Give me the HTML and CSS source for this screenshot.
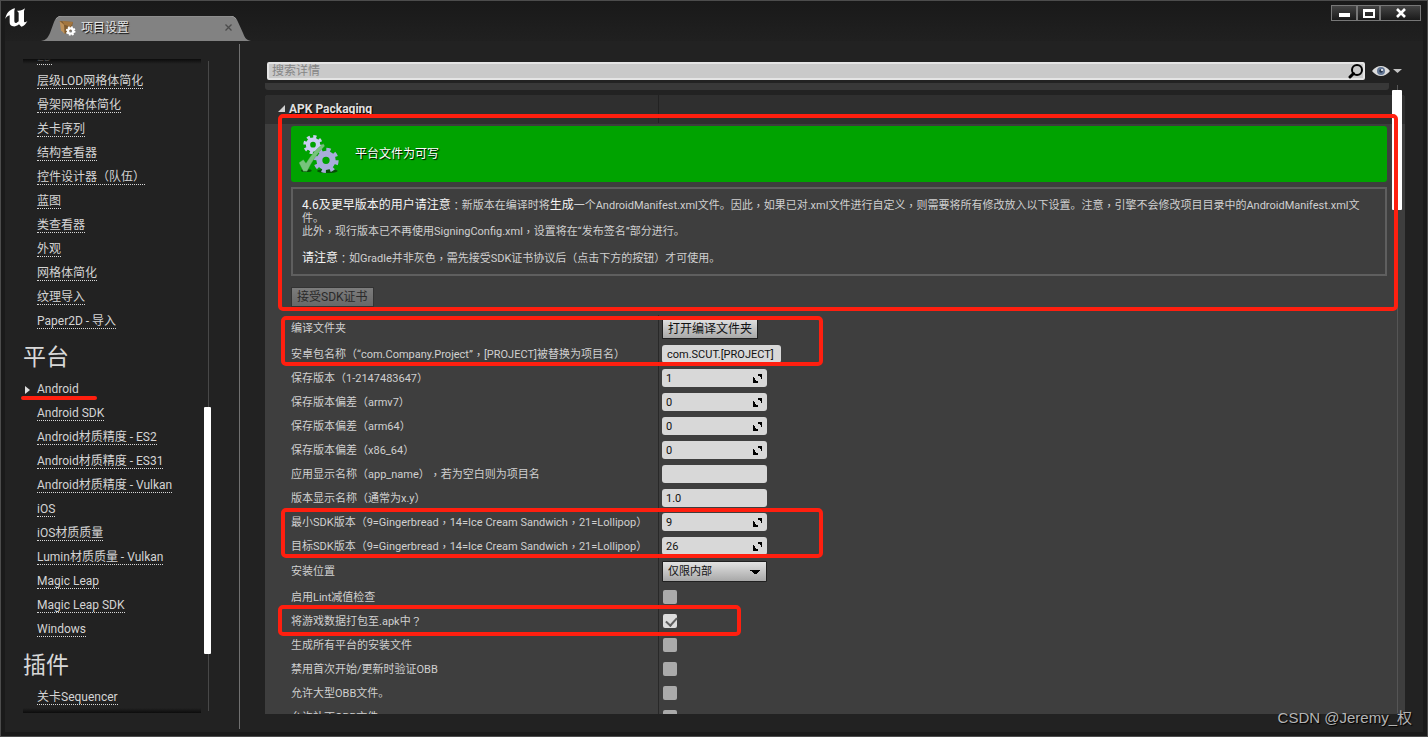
FILE: index.html
```html
<!DOCTYPE html>
<html lang="zh-CN">
<head>
<meta charset="utf-8">
<title>项目设置</title>
<link rel="stylesheet" href="styles.css">
</head>
<body>
<div class="window">
  <header class="titlebar">
    <svg class="logo" width="24" height="20" viewBox="0 0 72 60" aria-hidden="true"><path fill="#fff" d="M1 33C3 17 13 5 30 1L28 8V38C28 44 31 46 35 44L41 40V14L36 8C46 9 53 7 60 1L57 9V39C57 44 61 44 67 39C63 48 57 54 49 56L42 49C36 54 30 56 24 55C17 54 14 50 14 43V22C8 24 4 27 1 33Z"/></svg>
    <div class="tab">
      <svg class="tab-shape" width="210" height="25" viewBox="0 0 210 25" preserveAspectRatio="none" aria-hidden="true"><path fill="#828282" d="M0 25C6 24 7 21 9 17L13 6Q15 0 20 0H190Q195 0 197 6L202 17C204 22 205 24 210 25Z"/><path fill="none" stroke="#999" d="M15 3Q17 0 21 0H189Q193 0 195 3"/></svg>
      <div class="tab-content">
        <svg width="17" height="16" viewBox="0 0 51 48" aria-hidden="true"><path fill="#7e5b30" d="M2 3L42 6L37 30L17 42Z"/><path fill="#bd915a" d="M2 3L15 14L17 42L6 31Z"/><path fill="#a3763f" d="M10 3L42 6L35 20L16 14Z"/><circle cx="35" cy="33" r="8" fill="none" stroke="#fff" stroke-width="7"/><circle cx="35" cy="33" r="12" fill="none" stroke="#fff" stroke-width="5" stroke-dasharray="5 4.4"/></svg>
        <span class="tab-title">项目设置</span>
        <button class="tab-close" aria-label="关闭标签页"><svg width="7" height="7" viewBox="0 0 7 7"><path d="M.5.5l6 6M6.500.5l-6 6" stroke="#4c4c4c" stroke-width="1.300"/></svg></button>
      </div>
    </div>
    <div class="window-buttons">
      <button class="wb wb-min" aria-label="最小化"><svg width="11" height="10" viewBox="0 0 11 10"><path fill="#fff" d="M0 5h11v4H0z"/></svg></button>
      <button class="wb wb-max" aria-label="最大化"><svg width="12" height="10" viewBox="0 0 12 10"><path fill="#fff" fill-rule="evenodd" d="M0 1h12v9H0zM2 4v4h8V4z"/></svg></button>
      <button class="wb wb-close" aria-label="关闭"><svg width="12" height="10" viewBox="0 0 12 10"><path d="M2 1l8 8M10 1l-8 8" stroke="#fff" stroke-width="2.600"/></svg></button>
    </div>
  </header>

  <div class="content">
    <aside class="sidebar">
      <nav class="nav">
        <ul class="nav-list">
          <li><a href="#">2D</a></li>
          <li><a href="#">层级LOD网格体简化</a></li>
          <li><a href="#">骨架网格体简化</a></li>
          <li><a href="#">关卡序列</a></li>
          <li><a href="#">结构查看器</a></li>
          <li><a href="#">控件设计器（队伍）</a></li>
          <li><a href="#">蓝图</a></li>
          <li><a href="#">类查看器</a></li>
          <li><a href="#">外观</a></li>
          <li><a href="#">网格体简化</a></li>
          <li><a href="#">纹理导入</a></li>
          <li><a href="#">Paper2D - 导入</a></li>
        </ul>
        <h2>平台</h2>
        <ul>
          <li class="current"><a href="#">Android</a></li>
          <li><a href="#">Android SDK</a></li>
          <li><a href="#">Android材质精度 - ES2</a></li>
          <li><a href="#">Android材质精度 - ES31</a></li>
          <li><a href="#">Android材质精度 - Vulkan</a></li>
          <li><a href="#">iOS</a></li>
          <li><a href="#">iOS材质质量</a></li>
          <li><a href="#">Lumin材质质量 - Vulkan</a></li>
          <li><a href="#">Magic Leap</a></li>
          <li><a href="#">Magic Leap SDK</a></li>
          <li><a href="#">Windows</a></li>
        </ul>
        <h2>插件</h2>
        <ul>
          <li><a href="#">关卡Sequencer</a></li>
        </ul>
      </nav>
      <div class="side-scroll"><div class="side-thumb"></div></div>
    </aside>

    <main class="main">
      <div class="search-row">
        <div class="search">
          <input type="text" placeholder="搜索详情" aria-label="搜索详情">
          <svg width="16" height="16" viewBox="0 0 16 16" aria-hidden="true"><circle cx="10" cy="7" r="5" fill="none" stroke="#000" stroke-width="2"/><path d="M6.500 10.500L3 14" stroke="#000" stroke-width="3" stroke-linecap="round"/></svg>
        </div>
        <button class="view-options" aria-label="视图选项"><svg width="30" height="12" viewBox="0 0 30 12"><path fill="#dcdcdc" d="M0 6Q4 1 9 1T18 6Q14 11 9 11T0 6Z"/><circle cx="9" cy="6" r="4" fill="#647896"/><circle cx="9" cy="6" r="1.800" fill="#26364c"/><circle cx="10" cy="5" r="1" fill="#fff"/><path fill="#c4c4c4" d="M21 4h9l-4.500 4z"/></svg></button>
      </div>
      <div class="strip"></div>
      <section class="panel">
        <h3 class="category"><span class="category-name"><svg width="8" height="8" viewBox="0 0 8 8" aria-hidden="true"><path fill="#d0d0d0" d="M7 0v7H0z"/></svg>APK Packaging</span></h3>
        <div class="intro">
          <div class="banner">
            <svg width="40" height="40" viewBox="0 0 120 120" aria-hidden="true">
              <ellipse cx="85" cy="111" rx="31" ry="6" fill="#064f06"/><ellipse cx="22" cy="110" rx="16" ry="4" fill="#064f06"/>
              <g fill="none" stroke="#c9cdf0"><circle cx="42" cy="32" r="15" stroke-width="13"/><circle cx="42" cy="32" r="24" stroke-width="10" stroke-dasharray="9.400 9.450"/></g>
              <g fill="none" stroke="#a8addb"><circle cx="81" cy="79" r="20" stroke-width="18"/><circle cx="81" cy="79" r="32" stroke-width="12" stroke-dasharray="12.500 12.630"/></g>
              <path fill="#76c47c" stroke="#4c9f52" d="M0 86L13 77L21 88Q43 50 73 29L77 36Q46 66 24 112L13 112Z"/>
            </svg>
            <span>平台文件为可写</span>
          </div>
          <div class="notice">
            <p><strong>4.6及更早版本的用户请注意</strong><i>：</i>新版本在编译时将<strong>生成</strong>一个AndroidManifest.xml文件。因此<i>，</i>如果已对.xml文件进行自定义<i>，</i>则需要将所有修改放入以下设置。注意<i>，</i>引擎不会修改项目目录中的AndroidManifest.xml文<wbr>件。</p>
            <p>此外<i>，</i>现行版本已不再使用SigningConfig.xml<i>，</i>设置将在“发布签名”部分进行。</p>
            <p class="gap"><strong>请注意</strong><i>：</i>如Gradle并非灰色<i>，</i>需先接受SDK证书协议后（点击下方的按钮）才可使用。</p>
          </div>
          <button class="accept" disabled>接受SDK证书</button>
        </div>
        <div class="rows">
          <div class="row tall"><span class="name">编译文件夹</span><span class="value"><button class="open">打开编译文件夹</button></span></div>
          <div class="row"><label class="name" for="f1">安卓包名称（“com.Company.Project”<i>，</i>[PROJECT]被替换为项目名）</label><span class="value"><input class="field wide" id="f1" type="text" value="com.SCUT.[PROJECT]"></span></div>
          <div class="row"><label class="name" for="f2">保存版本（1-2147483647）</label><span class="value"><input class="field spin" id="f2" type="text" value="1"></span></div>
          <div class="row"><label class="name" for="f3">保存版本偏差（armv7）</label><span class="value"><input class="field spin" id="f3" type="text" value="0"></span></div>
          <div class="row"><label class="name" for="f4">保存版本偏差（arm64）</label><span class="value"><input class="field spin" id="f4" type="text" value="0"></span></div>
          <div class="row"><label class="name" for="f5">保存版本偏差（x86_64）</label><span class="value"><input class="field spin" id="f5" type="text" value="0"></span></div>
          <div class="row"><label class="name" for="f6">应用显示名称（app_name）<i>，</i>若为空白则为项目名</label><span class="value"><input class="field" id="f6" type="text" value=""></span></div>
          <div class="row"><label class="name" for="f7">版本显示名称（通常为x.y）</label><span class="value"><input class="field" id="f7" type="text" value="1.0"></span></div>
          <div class="row"><label class="name" for="f8">最小SDK版本（9=Gingerbread<i>，</i>14=Ice Cream Sandwich<i>，</i>21=Lollipop）</label><span class="value"><input class="field spin" id="f8" type="text" value="9"></span></div>
          <div class="row"><label class="name" for="f9">目标SDK版本（9=Gingerbread<i>，</i>14=Ice Cream Sandwich<i>，</i>21=Lollipop）</label><span class="value"><input class="field spin" id="f9" type="text" value="26"></span></div>
          <div class="row tall"><label class="name" for="f10">安装位置</label><span class="value"><select class="combo" id="f10"><option>仅限内部</option></select></span></div>
          <div class="row"><label class="name" for="c1">启用Lint减值检查</label><span class="value"><input class="check" id="c1" type="checkbox"></span></div>
          <div class="row"><label class="name" for="c2">将游戏数据打包至.apk中<i>？</i></label><span class="value"><input class="check" id="c2" type="checkbox" checked></span></div>
          <div class="row"><label class="name" for="c3">生成所有平台的安装文件</label><span class="value"><input class="check" id="c3" type="checkbox"></span></div>
          <div class="row"><label class="name" for="c4">禁用首次开始/更新时验证OBB</label><span class="value"><input class="check" id="c4" type="checkbox"></span></div>
          <div class="row"><label class="name" for="c5">允许大型OBB文件。</label><span class="value"><input class="check" id="c5" type="checkbox"></span></div>
          <div class="row"><label class="name" for="c6">允许补丁OBB文件。</label><span class="value"><input class="check" id="c6" type="checkbox"></span></div>
        </div>
      </section>
      <div class="main-scroll"><div class="main-thumb"></div></div>
    </main>
  </div>

  <div class="mark mark-intro"></div>
  <div class="mark mark-package"></div>
  <div class="mark mark-sdk"></div>
  <div class="mark mark-apk"></div>
  <div class="underline"></div>
  <div class="watermark">CSDN @Jeremy_权</div>
</div>
</body>
</html>
```

FILE: styles.css
```css
* { box-sizing: border-box; }

body {
  margin: 0;
  background: #1b1b1b;
  color: #d0d0d0;
  font: 12px/14px Roboto, "Noto Sans CJK SC", sans-serif;
}

button, input, select { font: inherit; margin: 0; }
ul, p, h2, h3 { margin: 0; padding: 0; font-weight: 400; }
ul { list-style: none; }
svg { display: block; flex: none; }

/* punctuation centred in its cell */
i {
  display: inline-block;
  font-family: "Noto Sans CJK TC", sans-serif;
  font-style: normal;
  line-height: 13px;
  vertical-align: top;
}

.window {
  position: relative;
  display: flex;
  flex-direction: column;
  height: 100vh;
  overflow: hidden;
  padding: 0 4px 4px;
  border: 1px solid #4c4c4c;
  background: #1a1a1a;
}

/* title bar */
.titlebar {
  display: flex;
  flex: none;
  height: 40px;
  background: linear-gradient(#191919, #202020);
}
.logo { margin: 7px 0 0; }
.tab {
  position: relative;
  width: 210px;
  height: 25px;
  margin: 15px 0 0 12px;
}
.tab-shape { position: absolute; inset: 0; width: 100%; }
.tab-content {
  position: relative;
  display: flex;
  align-items: center;
  height: 23px;
  padding: 0 19px 0 18px;
}
.tab-title {
  flex: 1;
  margin-left: 5px;
  color: #e4e4e4;
  text-shadow: 1px 1px 1px #000;
}
.tab-close { padding: 0; border: 0; background: none; }
.window-buttons {
  display: flex;
  height: 16px;
  margin: 4px 2px 0 auto;
}
.wb {
  display: flex;
  justify-content: center;
  align-items: center;
  padding: 0;
  border: 1px solid #777;
  background: linear-gradient(#444, #1a1a1a);
}
.wb-min { width: 26px; }
.wb-max { width: 23px; }
.wb-close { width: 41px; }

.content {
  display: flex;
  flex: 1;
  min-height: 0;
  background: #222;
}

/* sidebar */
.sidebar {
  display: flex;
  flex: none;
  width: 235px;
  margin: 3px 0;
  padding: 15px 28px 16px 18px;
  border-right: 1px solid #707070;
}
.nav {
  position: relative;
  width: 178px;
  overflow: hidden;
}
.nav::before, .nav::after {
  content: "";
  position: absolute;
  left: 0;
  right: 0;
  height: 5px;
}
.nav::before { top: 0; background: linear-gradient(#0c0c0c, transparent); }
.nav::after { bottom: 0; background: linear-gradient(transparent, #0c0c0c); }
.nav-list { margin-top: -13px; }
.nav li {
  display: flex;
  align-items: center;
  height: 24px;
  padding-left: 14px;
}
.nav a {
  border-bottom: 1px dotted #d8d8d8;
  color: #d4d4d4;
  line-height: 13px;
  text-decoration: none;
  white-space: nowrap;
}
.nav .current { padding-left: 2px; }
.current::before {
  content: "";
  margin-right: 7px;
  border: 4px solid transparent;
  border-left: 5px solid #ddd;
  border-right: 0;
}
.nav h2 {
  height: 44px;
  padding-top: 4px;
  color: #d8d8d8;
  font-size: 23px;
  line-height: 40px;
}
.side-scroll {
  width: 7px;
  margin: 2px 0 2px 3px;
  background: linear-gradient(#484848, #484848) 4px 0 / 1px 100% no-repeat;
}
.side-thumb {
  height: 38%;
  margin-top: 346px;
  border-radius: 1px;
  background: #fff;
}

/* details */
.main {
  position: relative;
  display: flex;
  flex: 1;
  flex-direction: column;
  min-width: 0;
  padding: 21px 18px 18px 25px;
}
.search-row {
  display: flex;
  flex: none;
  align-items: center;
  height: 18px;
  gap: 7px;
  padding: 0 3px 0 2px;
}
.search {
  display: flex;
  flex: 1;
  align-items: center;
  height: 18px;
  border: 2px solid #e4e4e4;
  border-radius: 2px;
  background: #c9c9c9;
}
.search input {
  flex: 1;
  min-width: 0;
  height: 14px;
  padding: 0 3px;
  border: 0;
  outline: 0;
  background: none;
}
.search input::placeholder { color: #858585; opacity: 1; }
.view-options { padding: 0; border: 0; background: none; }
.strip {
  flex: none;
  height: 7px;
  margin: 3px 16px 5px 0;
  border-radius: 0 0 3px 3px;
  background: #383838;
}
.panel {
  flex: 1;
  min-height: 0;
  overflow: hidden;
  border-radius: 3px 3px 0 0;
  background: #3e3e3e;
}
.category {
  display: flex;
  height: 29px;
  background: #2f2f2f;
  color: #e0e0e0;
  font-size: 12px;
  font-weight: 700;
  text-shadow: 1px 1px 1px #000;
}
.category-name {
  display: flex;
  align-items: center;
  gap: 3px;
  width: 394px;
  height: 28px;
  padding-left: 13px;
  border-right: 1px solid #222;
}
.intro { padding: 2px 18px 8px 26px; }
.banner {
  display: flex;
  align-items: center;
  gap: 16px;
  height: 56px;
  padding-left: 8px;
  border-radius: 3px;
  background: #00a300;
  color: #fff;
  text-shadow: 1px 1px 1px #000;
}
.notice {
  margin: 5px 0 11px;
  padding: 10px 9px 9px;
  border: 2px solid #5f5f5f;
  font-size: 11px;
  line-height: 13px;
}
.notice strong { color: #f4f4f4; font-size: 12px; font-weight: 400; }
.notice .gap { margin-top: 14px; }
.accept {
  display: block;
  height: 20px;
  padding: 0 5px;
  border: 1px solid #333;
  background: linear-gradient(#7c7c7c, #686868);
  color: #2a2a2a;
  line-height: 18px;
}

.row {
  display: flex;
  height: 24px;
}
.tall { height: 27px; }
.name {
  display: flex;
  align-items: center;
  width: 394px;
  padding: 1px 0 0 26px;
  border-right: 1px solid #282828;
  font-size: 11px;
  white-space: nowrap;
}
.value {
  display: flex;
  align-items: center;
  padding-left: 3px;
}
.field {
  width: 105px;
  height: 18px;
  padding: 0 4px;
  border: 0;
  border-radius: 3px;
  background: #d8d8d8;
  color: #111;
  font-size: 11px;
}
.wide { width: 119px; padding: 0 5px; }
.spin {
  background:
    linear-gradient(45deg, #000 50%, transparent 50%) 91px 8px / 6px 6px no-repeat,
    linear-gradient(225deg, #000 50%, transparent 50%) 95px 5px / 5px 5px no-repeat,
    #d8d8d8;
}
.open, .combo {
  border: 1px solid #202020;
  background: linear-gradient(#e2e2e2, #a8a8a8);
  color: #111;
}
.open { height: 21px; padding: 0 5px; line-height: 18px; }
.combo {
  width: 105px;
  height: 21px;
  padding: 0 5px;
  border-radius: 1px;
  font-size: 11px;
  appearance: none;
  background:
    linear-gradient(to bottom left, #000 50%, transparent 50%) 87px 8px / 5px 5px no-repeat,
    linear-gradient(to bottom right, #000 50%, transparent 50%) 92px 8px / 5px 5px no-repeat,
    linear-gradient(#e2e2e2, #a8a8a8);
}
.check {
  width: 14px;
  height: 14px;
  margin-left: 1px;
  border-radius: 2px;
  appearance: none;
  background: #aaa;
}
.check:checked { background: #dcdcdc; }
.check:checked::before {
  content: "";
  display: block;
  width: 5px;
  height: 9px;
  margin: 1px 0 0 5px;
  border: solid #606060;
  border-width: 0 2px 2px 0;
  transform: rotate(42deg);
}

/* scrollbar lies over the panel's right edge */
.main-scroll {
  position: absolute;
  top: 44px;
  right: 21px;
  bottom: 19px;
  width: 10px;
  background: linear-gradient(#555, #555) 5px 0 / 1px 100% no-repeat;
}
.main-thumb {
  height: 120px;
  margin-top: 5px;
  border-radius: 1px;
  background: #fff;
}

/* annotations */
.mark, .underline, .watermark { position: absolute; pointer-events: none; }
.mark { border: 4px solid #ff1f0f; border-radius: 5px; }
.mark-intro { left: 277px; right: 29px; top: 113px; height: 197px; }
.mark-package { left: 280px; top: 315px; width: 542px; height: 50px; }
.mark-sdk { left: 280px; top: 507px; width: 542px; height: 50px; }
.mark-apk { left: 277px; top: 604px; width: 463px; height: 31px; }
.underline {
  left: 20px;
  top: 395px;
  width: 76px;
  height: 4px;
  border-radius: 2px;
  background: #ff1f0f;
}
.watermark {
  right: 15px;
  bottom: 8px;
  color: #b4b4b4;
  font: 15px/20px "Liberation Sans", "Noto Sans CJK SC", sans-serif;
  text-shadow: 1px 1px 1px #000;
}
```
